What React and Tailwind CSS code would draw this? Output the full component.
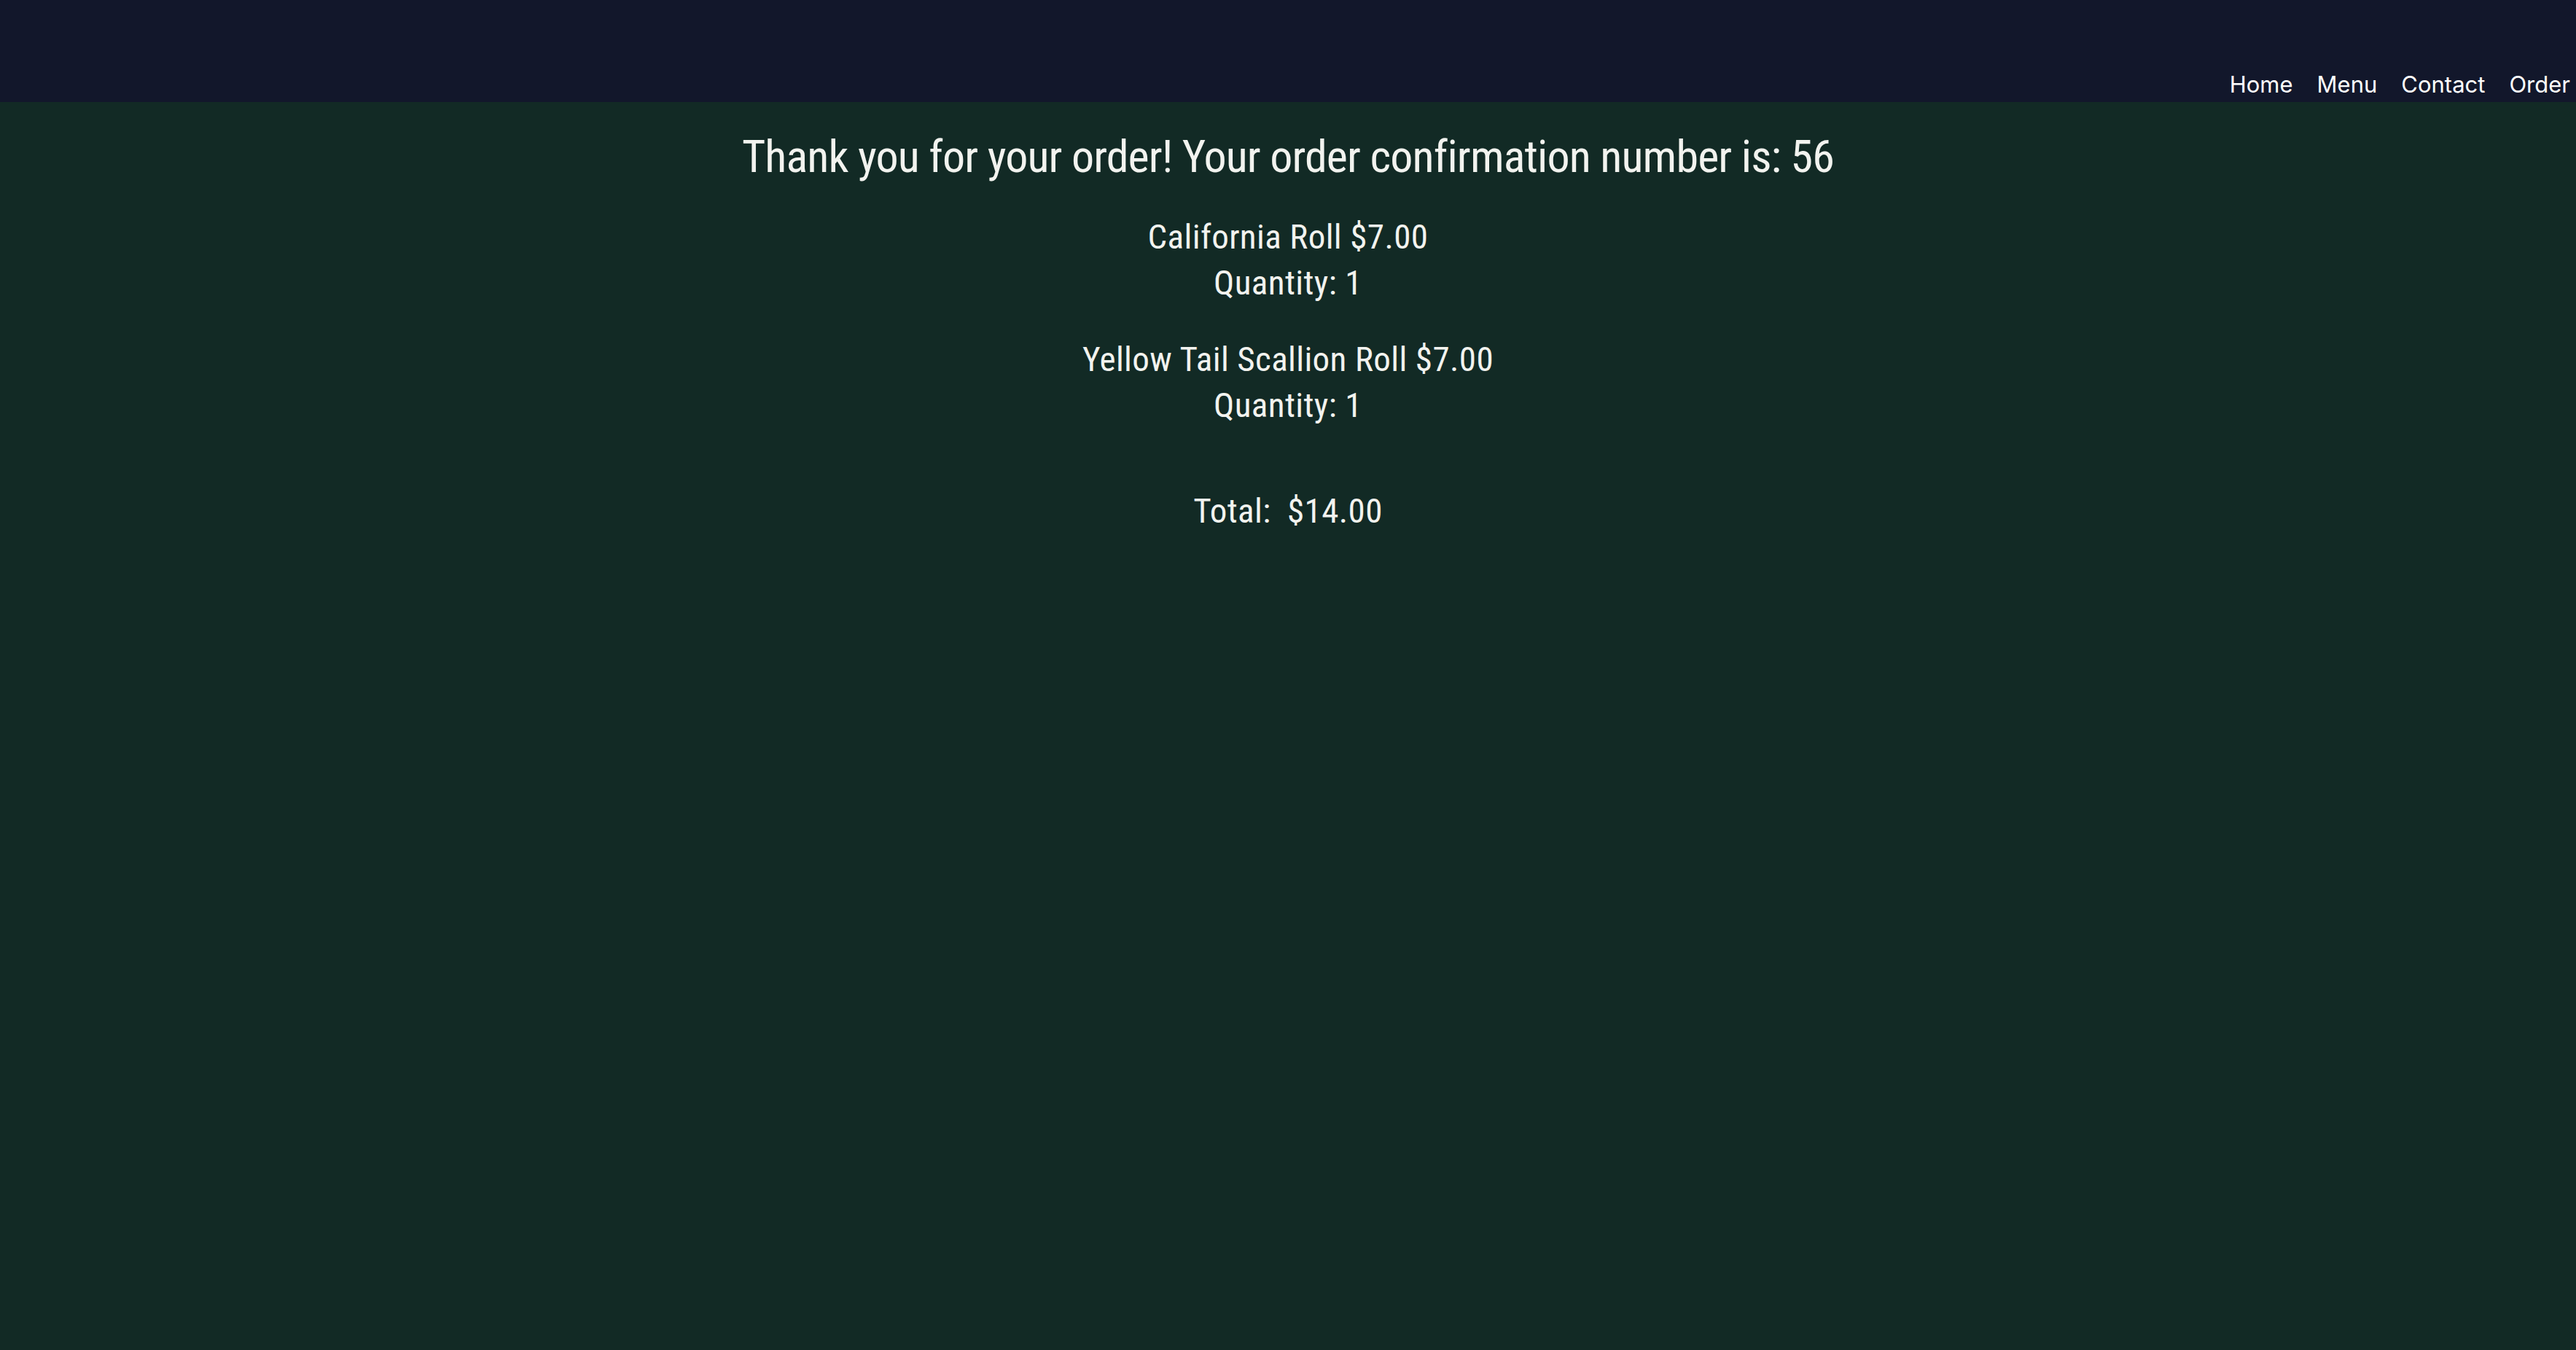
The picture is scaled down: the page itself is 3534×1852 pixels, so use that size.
import React from "react";

const items = [
  { name: "California Roll", price: 7, quantity: 1 },
  { name: "Yellow Tail Scallion Roll", price: 7, quantity: 1 },
];

function NavBar() {
  const links = ["Home", "Menu", "Contact", "Order"];
  return (
    <nav className="h-[140px] bg-[#12172b] flex justify-end items-end pr-[8px]">
      <ul className="flex gap-[33px] font-['Inter',sans-serif] text-[31px] leading-[48px] text-white">
        {links.map((l) => (
          <li key={l}>
            <a href="#">{l}</a>
          </li>
        ))}
      </ul>
    </nav>
  );
}

export default function App() {
  const total = items.reduce((sum, i) => sum + i.price * i.quantity, 0);

  return (
    <div className="min-h-screen flex flex-col bg-[#122a25]">
      {/* NAVBAR */}
      <NavBar />

      {/* CONFIRMATION */}
      <main className="flex flex-col items-center text-center text-[#f2f3ef] font-['Roboto_Condensed','Roboto',sans-serif] font-stretch-condensed pt-[37px]">
        <h1 className="text-[62px] leading-[76px] tracking-[-0.85px]">
          Thank you for your order! Your order confirmation number is: 56
        </h1>

        <div className="mt-[40px] flex flex-col gap-[42px] text-[47px] leading-[63px] tracking-[0.4px]">
          {items.map((item) => (
            <div key={item.name}>
              <p>
                {item.name} ${item.price.toFixed(2)}
              </p>
              <p>Quantity: {item.quantity}</p>
            </div>
          ))}
        </div>

        <p className="mt-[82px] text-[47px] leading-[63px] tracking-[0.4px] whitespace-pre">
          Total:  ${total.toFixed(2)}
        </p>
      </main>
    </div>
  );
}
